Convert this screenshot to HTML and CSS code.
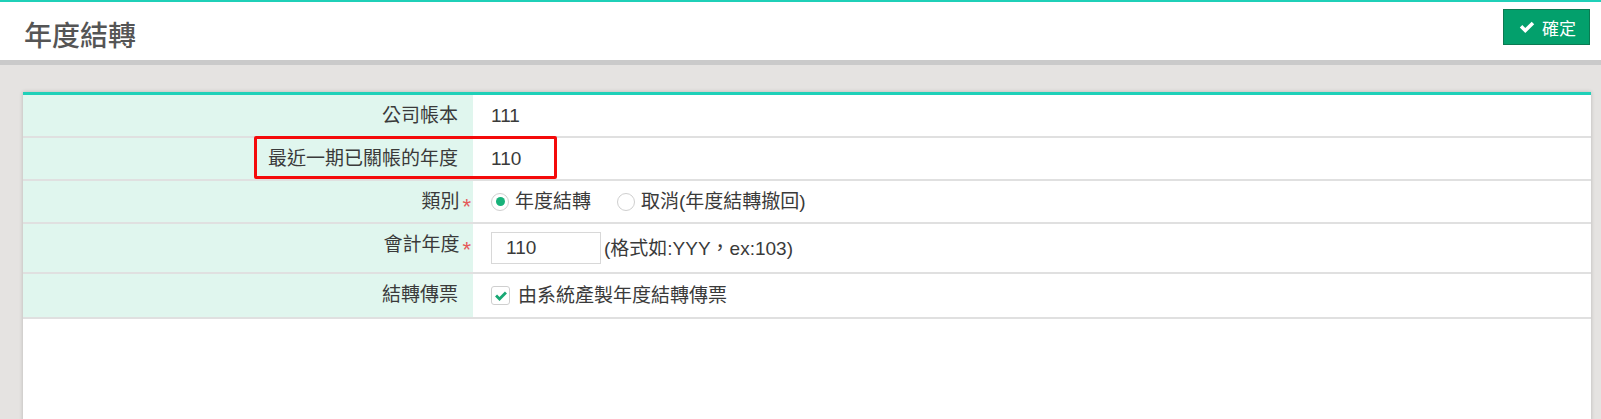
FILE: index.html
```html
<!DOCTYPE html>
<html lang="zh-Hant">
<head>
    <meta charset="UTF-8">
    <title>年度結轉</title>
    <link rel="stylesheet" href="styles.css">
</head>
<body>
    <div class="header">
        <h1 class="title">年度結轉</h1>
        <button class="btn-ok" type="button">
            <svg class="btn-icon" viewBox="0 0 16 16" width="16" height="16"><path d="M0.8 8.6 L3.3 6.1 L6.3 9.1 L12.7 2.7 L15.2 5.2 L6.3 14.1 Z" fill="#fff"/></svg>
            確定
        </button>
    </div>

    <div class="card">
        <div class="row">
            <div class="label">公司帳本</div>
            <div class="value">111</div>
        </div>
        <div class="row row-mark">
            <div class="label">最近一期已關帳的年度</div>
            <div class="value">110</div>
            <div class="mark"></div>
        </div>
        <div class="row">
            <div class="label">類別<span class="req">*</span></div>
            <div class="value">
                <label class="opt"><span class="radio checked"></span>年度結轉</label>
                <label class="opt"><span class="radio"></span>取消(年度結轉撤回)</label>
            </div>
        </div>
        <div class="row">
            <div class="label">會計年度<span class="req">*</span></div>
            <div class="value">
                <input class="year-input" type="text" value="110">
                <span class="hint">(格式如:YYY，ex:103)</span>
            </div>
        </div>
        <div class="row row-check">
            <div class="label">結轉傳票</div>
            <div class="value">
                <label class="opt">
                    <span class="checkbox"><svg viewBox="0 0 16 16" width="14" height="14"><path d="M1.2 8.6 L3.5 6.3 L6.3 9.1 L12.5 2.9 L14.8 5.2 L6.3 13.7 Z" fill="#18a874"/></svg></span>由系統產製年度結轉傳票
                </label>
            </div>
        </div>
    </div>
</body>
</html>
```

FILE: styles.css
```css
body {
    margin: 0;
    background-color: #e5e3e1;
    font-family: "Liberation Sans", "Noto Sans CJK TC", sans-serif;
    color: #333;
}
.header {
    display: flex;
    justify-content: space-between;
    align-items: flex-start;
    height: 58px;
    background-color: #fff;
    border-top: 2px solid #1fd0b8;
    border-bottom: 5px solid #cacaca;
    padding: 0 11px 0 24px;
}
.title {
    margin: 0;
    padding-top: 21px;
    font-size: 28px;
    line-height: 28px;
    font-weight: 500;
    color: #555;
}
.btn-ok {
    display: flex;
    align-items: center;
    gap: 7px;
    margin-top: 7px;
    height: 36px;
    width: 87px;
    padding: 0 0 0 15px;
    background-color: #03a06c;
    border: 1px solid #0b7a52;
    color: #fff;
    font-family: "Liberation Sans", "Noto Sans CJK TC", sans-serif;
    font-size: 17px;
}
.btn-icon {
    display: block;
}
.card {
    margin: 27px 10px 0 23px;
    min-height: 400px;
    background-color: #fff;
    border-top: 3px solid #1fd0b8;
    box-shadow: 0 0 4px rgba(0, 0, 0, 0.2);
}
.row {
    display: grid;
    grid-template-columns: 450px 1fr;
    border-bottom: 2px solid #e0e0e0;
    font-size: 19px;
    line-height: 25px;
    color: #3a3a3a;
}
.row-mark {
    position: relative;
}
.row-check .value {
    padding: 9px 18px;
}
.label {
    background-color: #e0f6ee;
    text-align: right;
    padding: 8px 15px 8px 0;
}
.req {
    color: #e55a5a;
    font-size: 22px;
    line-height: 0;
    vertical-align: -6px;
    margin-left: 3px;
    margin-right: -13px;
}
.value {
    display: flex;
    align-items: center;
    padding: 8px 18px;
}
.mark {
    position: absolute;
    left: 231px;
    top: -2px;
    width: 303px;
    height: 43px;
    box-sizing: border-box;
    border: 3px solid #f40a0a;
    border-radius: 2px;
}
.opt {
    display: flex;
    align-items: center;
    margin-right: 26px;
}
.radio {
    width: 18px;
    height: 18px;
    box-sizing: border-box;
    border: 1px solid #cfcfcf;
    border-radius: 50%;
    margin-right: 6px;
    display: flex;
    align-items: center;
    justify-content: center;
}
.radio.checked::after {
    content: "";
    width: 9px;
    height: 9px;
    border-radius: 50%;
    background-color: #18b27a;
}
.year-input {
    width: 110px;
    height: 32px;
    box-sizing: border-box;
    border: 1px solid #d8d8d8;
    padding: 0 14px;
    font-family: "Liberation Sans", sans-serif;
    font-size: 19px;
    color: #3a3a3a;
    margin-right: 3px;
}
.hint {
    font-size: 19px;
}
.checkbox {
    width: 19px;
    height: 19px;
    box-sizing: border-box;
    border: 1px solid #cfcfcf;
    border-radius: 3px;
    margin-right: 8px;
    display: flex;
    align-items: center;
    justify-content: center;
}
```
